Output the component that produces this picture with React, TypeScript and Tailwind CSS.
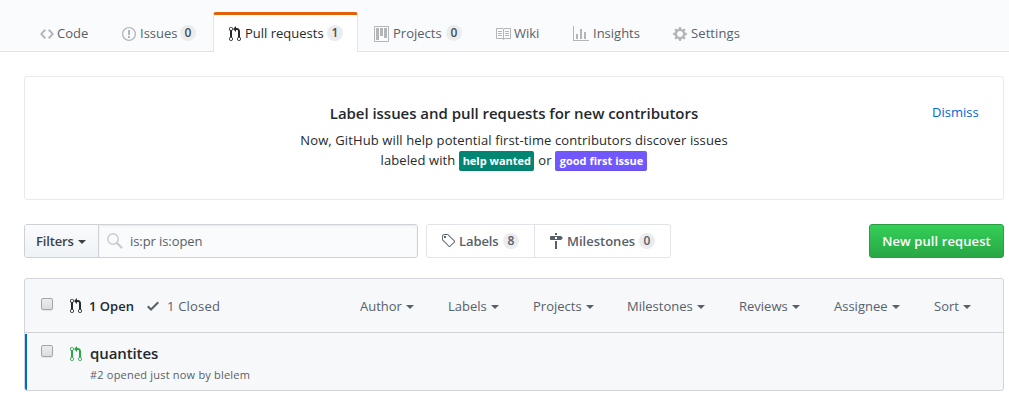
import React from "react";

const paths = {
  code: "M9.5 3L8 4.5 11.5 8 8 11.5 9.5 13 14 8 9.5 3zm-5 0L0 8l4.5 5L6 11.5 2.5 8 6 4.5 4.5 3z",
  issue:
    "M7 2.3c3.14 0 5.7 2.56 5.7 5.7s-2.56 5.7-5.7 5.7A5.71 5.71 0 0 1 1.3 8c0-3.14 2.56-5.7 5.7-5.7zM7 1C3.14 1 0 4.14 0 8s3.14 7 7 7 7-3.14 7-7-3.14-7-7-7zm1 3H6v5h2V4zm0 6H6v2h2v-2z",
  pull: "M11 11.28V5c-.03-.78-.34-1.47-.94-2.06C9.46 2.35 8.78 2.03 8 2H7V0L4 3l3 3V4h1c.27.02.48.11.69.31.21.2.3.42.31.69v6.28A1.993 1.993 0 0 0 10 15a1.993 1.993 0 0 0 1-3.72zm-1 2.92c-.66 0-1.2-.55-1.2-1.2 0-.65.55-1.2 1.2-1.2.65 0 1.2.55 1.2 1.2 0 .65-.55 1.2-1.2 1.2zM4 3c0-1.11-.89-2-2-2a1.993 1.993 0 0 0-1 3.72v6.56A1.993 1.993 0 0 0 2 15a1.993 1.993 0 0 0 1-3.72V4.72c.59-.34 1-.98 1-1.72zm-.8 10c0 .66-.55 1.2-1.2 1.2-.65 0-1.2-.55-1.2-1.2 0-.65.55-1.2 1.2-1.2.65 0 1.2.55 1.2 1.2zM2 4.2C1.34 4.2.8 3.65.8 3c0-.65.55-1.2 1.2-1.2.65 0 1.2.55 1.2 1.2 0 .65-.55 1.2-1.2 1.2z",
  project:
    "M10 12h3V2h-3v10zm-4-2h3V2H6v8zm-4 4h3V2H2v12zm-1 1h13V1H1v14zM14 0H1a1 1 0 0 0-1 1v14a1 1 0 0 0 1 1h13a1 1 0 0 0 1-1V1a1 1 0 0 0-1-1z",
  book: "M3 5h4v1H3V5zm0 3h4V7H3v1zm0 2h4V9H3v1zm11-5h-4v1h4V5zm0 2h-4v1h4V7zm0 2h-4v1h4V9zm2-6v9c0 .55-.45 1-1 1H9.5l-1 1-1-1H2c-.55 0-1-.45-1-1V3c0-.55.45-1 1-1h5.5l1 1 1-1H15c.55 0 1 .45 1 1zm-8 .5L7.5 3H2v9h6V3.5zm7-.5H9.5l-.5.5V12h6V3z",
  graph: "M16 14v1H0V0h1v14h15zM5 13H3V8h2v5zm4 0H7V3h2v10zm4 0h-2V6h2v7z",
  gear: "M14 8.77v-1.6l-1.94-.64-.45-1.09.88-1.84-1.13-1.13-1.81.91-1.09-.45-.69-1.92h-1.6l-.63 1.94-1.11.45-1.84-.88-1.13 1.13.91 1.81-.45 1.09L0 7.23v1.59l1.94.64.45 1.09-.88 1.84 1.13 1.13 1.81-.91 1.09.45.69 1.92h1.59l.63-1.94 1.11-.45 1.84.88 1.13-1.13-.92-1.81.47-1.09L14 8.75v.02zM7 11c-1.66 0-3-1.34-3-3s1.34-3 3-3 3 1.34 3 3-1.34 3-3 3z",
  tag: "M7.73 1.73C7.26 1.26 6.62 1 5.96 1H3.5C2.13 1 1 2.13 1 3.5v2.47c0 .66.27 1.3.73 1.77l6.06 6.06c.39.39 1.02.39 1.41 0l4.59-4.59a.996.996 0 0 0 0-1.41L7.73 1.73zM2.38 7.09c-.31-.3-.47-.7-.47-1.13V3.5c0-.88.72-1.59 1.59-1.59h2.47c.42 0 .83.16 1.13.47l6.14 6.13-4.73 4.73-6.13-6.15zM3.01 3h2v2H3V3h.01z",
  milestone:
    "M8 2H6V0h2v2zm4 5H2c-.55 0-1-.45-1-1V4c0-.55.45-1 1-1h10l2 2-2 2zM8 4H6v2h2V4zM6 16h2V8H6v8z",
  check: "M12 5l-8 8-4-4 1.5-1.5L4 10l6.5-6.5L12 5z",
};

function Icon({ name, w, className = "" }: { name: keyof typeof paths; w: number; className?: string }) {
  return (
    <svg
      width={w}
      height={16}
      viewBox={`0 0 ${w} 16`}
      fill="currentColor"
      fillRule="evenodd"
      className={`block shrink-0 ${className}`}
    >
      <path d={paths[name]} />
    </svg>
  );
}

function Counter({ children, className = "" }: { children: React.ReactNode; className?: string }) {
  return (
    <span
      className={`flex h-4 w-4 shrink-0 items-center justify-center rounded-full bg-[#ebecee] text-[12px] leading-none font-semibold ${className}`}
    >
      {children}
    </span>
  );
}

function Caret() {
  return <span className="mt-px border-x-4 border-t-4 border-x-transparent border-t-current" />;
}

interface TabItem {
  name: keyof typeof paths;
  w: number;
  label: string;
  box: string;
  text: string;
  count?: number;
  active?: boolean;
}

const tabs: TabItem[] = [
  { name: "code", w: 14, label: "Code", box: "w-[82px]", text: "ml-[3px] w-[33px]" },
  { name: "issue", w: 14, label: "Issues", box: "w-[107px]", text: "ml-1 w-[40px]", count: 0 },
  { name: "pull", w: 12, label: "Pull requests", box: "w-[145px]", text: "ml-1 w-[82px]", count: 1, active: true },
  { name: "project", w: 15, label: "Projects", box: "w-[121px]", text: "ml-1 w-[53px]", count: 0 },
  { name: "book", w: 16, label: "Wiki", box: "w-[78px]", text: "ml-[3px]" },
  { name: "graph", w: 16, label: "Insights", box: "w-[100px]", text: "ml-1" },
  { name: "gear", w: 14, label: "Settings", box: "w-[100px]", text: "ml-1 tracking-[0.1px]" },
];

const filters = [
  { label: "Author", box: "w-[88px]" },
  { label: "Labels", box: "w-[85px]" },
  { label: "Projects", box: "w-[94px]" },
  { label: "Milestones", box: "w-[112px]" },
  { label: "Reviews", box: "w-[95px]" },
  { label: "Assignee", box: "w-[100px]" },
  { label: "Sort", box: "w-[69px]" },
];

function Checkbox() {
  return (
    <span className="h-3 w-3 shrink-0 rounded-[2px] border border-[#a6a6a6] bg-linear-to-b from-[#ededed] to-[#dcdcdc] shadow-[0_1px_1px_rgba(0,0,0,0.08)]" />
  );
}

export default function App() {
  return (
    <div className="h-[406px] w-[1009px] overflow-hidden bg-white font-['Open_Sans',sans-serif] text-[13px] whitespace-nowrap text-[#24292e]">
      <nav className="flex h-[52px] items-end border-b border-[#e1e4e8] bg-[#fafbfc] pl-6">
        {tabs.map((t) => (
          <div
            key={t.label}
            className={`-mb-px flex h-10 shrink-0 items-center ${t.box} ${
              t.active
                ? "rounded-t-[3px] border-x border-t-[3px] border-x-[#e1e4e8] border-t-[#e36209] bg-white pl-[15px]"
                : "pl-4 text-[#586069]"
            }`}
          >
            <span className={`flex items-center ${t.active ? "" : "pt-[3px]"}`}>
              <Icon name={t.name} w={t.w} className={t.active ? "" : "text-[#b3b6b9]"} />
              <span className={`-mt-0.5 leading-5 ${t.text}`}>{t.label}</span>
              {t.count !== undefined && <Counter className="-mt-px text-[#444d56]">{t.count}</Counter>}
            </span>
          </div>
        ))}
      </nav>

      <main className="px-6 pt-6">
        <section className="flex h-[124px] w-[980px] rounded-[3px] border border-[#e8eaed] pt-6">
          <div className="flex-1 pl-[71px] text-center">
            <h3 className="text-[15px] leading-6 font-semibold tracking-[-0.04px]">
              Label issues and pull requests for new contributors
            </h3>
            <p className="mt-[5px] leading-[21px] tracking-[0.11px]">
              Now, GitHub will help potential first-time contributors discover issues
            </p>
            <p className="-mt-px flex items-center justify-center leading-[21px]">
              <span className="tracking-[0.1px]">labeled with</span>
              <span className="ml-1 flex h-5 w-[75px] items-center justify-center rounded-[2px] bg-[#008672] text-[11px] font-bold text-white shadow-[inset_0_-1px_0_rgba(27,31,35,0.12)]">
                help wanted
              </span>
              <span className="mx-1">or</span>
              <span className="flex h-5 w-[92px] items-center justify-center rounded-[2px] bg-[#7057ff] text-[11px] font-bold text-white shadow-[inset_0_-1px_0_rgba(27,31,35,0.12)]">
                good first issue
              </span>
            </p>
          </div>
          <a className="w-[71px] pt-px leading-5 text-[#0366d6]">Dismiss</a>
        </section>

        <div className="mt-6 flex h-[34px] w-[980px]">
          <div className="flex w-[394px] rounded-[3px] border border-[#ced2d7]">
            <button className="flex w-[74px] items-center gap-1 rounded-l-[2px] border-r border-[#ced2d7] bg-linear-to-b from-[#fafbfc] to-[#eff3f6] pt-px pl-[11px] font-semibold text-[#3a4149]">
              <span className="tracking-[-0.15px]">Filters</span> <Caret />
            </button>
            <div className="flex flex-1 items-center rounded-r-[2px] bg-[#fafbfc] pl-2 text-[#586069] shadow-[inset_0_1px_2px_rgba(27,31,35,0.075)]">
              <svg width="16" height="16" viewBox="0 0 16 16" fill="none" stroke="#c6cbd1" className="mr-[7px]">
                <circle cx="6" cy="6" r="5.2" strokeWidth="1.4" />
                <path d="M10 10l4.5 4.5" strokeWidth="2.2" strokeLinecap="round" />
              </svg>
              <span className="pt-0.5 tracking-[-0.08px]">is:pr is:open</span>
            </div>
          </div>
          <div className="ml-2 flex w-[245px] rounded-[3px] border border-[#e1e4e8] font-semibold text-[#586069]">
            <div className="flex w-[108px] items-center border-r border-[#e1e4e8] pl-[14px]">
              <Icon name="tag" w={14} />
              <span className="ml-1 w-[44px] pt-0.5 tracking-[-0.1px]">Labels</span>
              <Counter>8</Counter>
            </div>
            <div className="flex items-center pl-[14px]">
              <Icon name="milestone" w={14} />
              <span className="ml-1 w-[72px] pt-0.5">Milestones</span>
              <Counter>0</Counter>
            </div>
          </div>
          <button className="ml-auto w-[135px] rounded-[3px] border border-[#2a9d45] bg-linear-to-b from-[#34d058] to-[#28a745] pt-0.5 font-semibold tracking-[0.1px] text-white">
            New pull request
          </button>
        </div>

        <section className="mt-5 h-[113px] w-[980px] overflow-hidden rounded-[3px] border border-[#d1d5da] bg-[#f6f8fa]">
          <header className="flex h-[54px] items-center border-b border-[#d1d5da] pl-4 text-[#586069]">
            <span className="-mt-1 flex">
              <Checkbox />
            </span>
            <Icon name="pull" w={12} className="mt-px ml-[17px] text-[#24292e]" />
            <span className="ml-[7px] w-[58px] pt-0.5 font-semibold text-[#24292e]">1 Open</span>
            <Icon name="check" w={12} className="mt-px" />
            <span className="ml-[8px] w-[193px] pt-0.5 tracking-[0.2px]">1 Closed</span>
            {filters.map((f) => (
              <span key={f.label} className={`flex shrink-0 items-center gap-1 pt-0.5 ${f.box}`}>
                {f.label} <Caret />
              </span>
            ))}
          </header>
          <article className="mt-px flex h-14 border-l-2 border-[#0366d6] pl-[14px]">
            <span className="mt-[11px] flex">
              <Checkbox />
            </span>
            <Icon name="pull" w={12} className="mt-3 ml-[17px] text-[#28a745]" />
            <div className="ml-2 pt-[9px]">
              <h4 className="text-[15px] leading-5 font-semibold tracking-[-0.1px]">quantites</h4>
              <p className="mt-[3px] text-[11px] leading-[18px] tracking-[0.2px] text-[#586069]">
                #2 opened just now by blelem
              </p>
            </div>
          </article>
        </section>
      </main>
    </div>
  );
}
